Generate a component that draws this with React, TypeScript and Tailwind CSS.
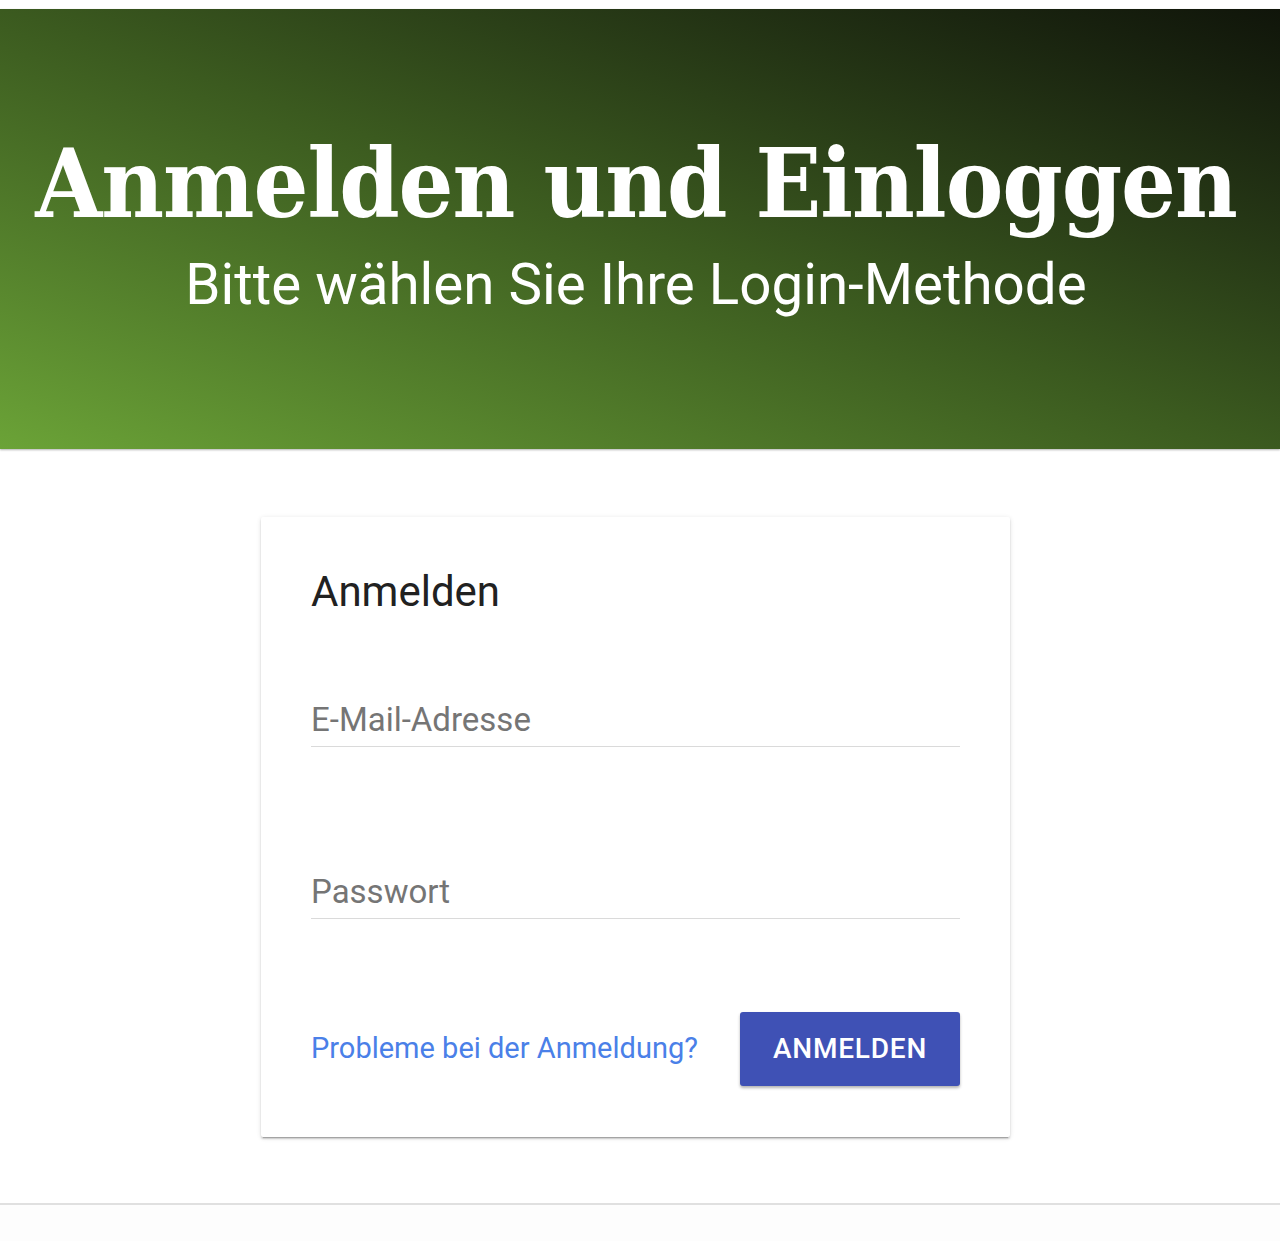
import { useState } from "react";

export default function App() {
  const [email, setEmail] = useState("");
  const [password, setPassword] = useState("");

  return (
    <div className="min-h-screen bg-white font-['Roboto','Liberation_Sans',sans-serif]">
      <div className="h-[9px] bg-white" />
      <header className="flex h-[440px] flex-col items-center bg-linear-to-tr from-[#6ba337] via-[#3b5a1f] to-[#10150a] pt-[127px] pr-[8px] text-white shadow-[0_1px_2px_rgba(0,0,0,0.3)]">
        <h1 className="font-['DejaVu_Serif','Liberation_Serif',serif] text-[96px] font-bold leading-none font-stretch-condensed tracking-[-1px] whitespace-nowrap">
          Anmelden und Einloggen
        </h1>
        <p className="mt-[25px] text-[56.5px] leading-none">
          Bitte wählen Sie Ihre Login-Methode
        </p>
      </header>

      <main className="flex justify-center pt-[68px] pr-[9px]">
        <div className="w-[749px] rounded-[2px] bg-white px-[50px] pt-[50px] pb-[51px] shadow-[0_2px_2px_rgba(0,0,0,0.14),0_3px_1px_-2px_rgba(0,0,0,0.2),0_1px_5px_rgba(0,0,0,0.12)]">
          <h2 className="text-[42px] leading-[50px] text-[#212121]">Anmelden</h2>

          <form className="mt-[83px]" onSubmit={(e) => e.preventDefault()}>
            <div className="border-b-[1.5px] border-[#dadada] pb-[6px]">
              <input
                type="email"
                value={email}
                onChange={(e) => setEmail(e.target.value)}
                placeholder="E-Mail-Adresse"
                className="h-[40px] w-full bg-transparent text-[33px] text-[#212121] outline-none placeholder:text-[#757575]"
              />
            </div>

            <div className="mt-[125px] border-b-[1.5px] border-[#dadada] pb-[6px]">
              <input
                type="password"
                value={password}
                onChange={(e) => setPassword(e.target.value)}
                placeholder="Passwort"
                className="h-[40px] w-full bg-transparent text-[33px] text-[#212121] outline-none placeholder:text-[#757575]"
              />
            </div>

            <div className="mt-[93px] flex items-center justify-between">
              <a href="#" className="text-[29px] text-[#4a80e8]">
                Probleme bei der Anmeldung?
              </a>
              <button
                type="submit"
                className="h-[74px] w-[220px] rounded-[3px] bg-[#3f51b5] text-[28px] font-medium tracking-[0.8px] text-white shadow-[0_2px_3px_rgba(0,0,0,0.3)]"
              >
                ANMELDEN
              </button>
            </div>
          </form>
        </div>
      </main>

      <footer className="mt-[66px] h-[38px] border-t-2 border-[#e0e0e0] bg-[#fdfdfd]" />
    </div>
  );
}
